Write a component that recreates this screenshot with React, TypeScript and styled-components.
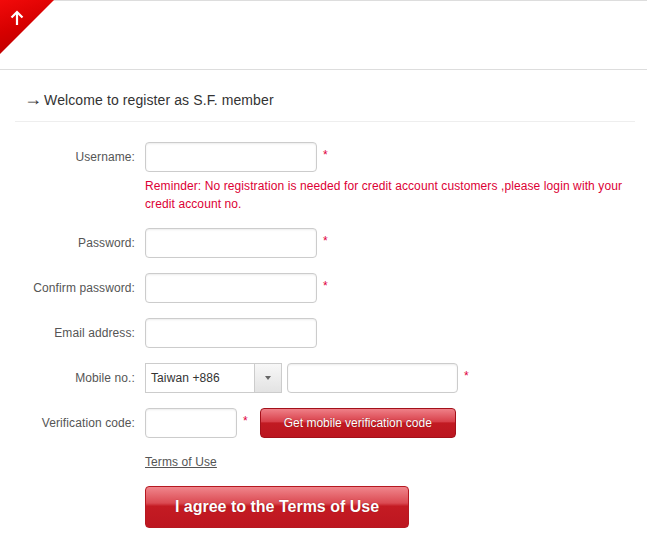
import styled, { createGlobalStyle } from "styled-components";

const GlobalStyle = createGlobalStyle`
  body {
    margin: 0;
    background: #fff;
    font-family: Arial, "Liberation Sans", Helvetica, sans-serif;
    color: #333;
  }
`;

const TopBar = styled.header`
  position: relative;
  height: 68px;
  border-top: 1px solid #ddd;
  border-bottom: 1px solid #ddd;
`;

const BackToTop = styled.a`
  position: absolute;
  left: 0;
  top: -1px;
  width: 54px;
  height: 54px;
  background: linear-gradient(160deg, #f20a0a 0%, #d60000 45%, #b30000 100%);
  clip-path: polygon(0 0, 100% 0, 0 100%);
  cursor: pointer;

  svg {
    position: absolute;
    left: 10px;
    top: 10px;
  }
`;

const Content = styled.main`
  padding: 0 12px 0 15px;
`;

const Title = styled.h2`
  margin: 0;
  height: 20px;
  padding: 20px 0 11px 9px;
  font-size: 14px;
  line-height: 20px;
  font-weight: normal;
  letter-spacing: 0.1px;
  color: #333;
  border-bottom: 1px solid #eee;
`;

const TitleArrow = styled.span`
  font-size: 18px;
  line-height: 0;
  margin-right: 2px;
`;

const Form = styled.form`
  display: grid;
  grid-template-columns: 120px 1fr;
  column-gap: 10px;
  row-gap: 15px;
  padding-top: 20px;
  font-size: 12px;
  letter-spacing: 0.1px;
`;

const Label = styled.label`
  height: 30px;
  line-height: 30px;
  text-align: right;
  color: #555;
  white-space: nowrap;
`;

const Field = styled.div`
  display: flex;
  flex-direction: column;
`;

const Line = styled.div`
  display: flex;
  align-items: center;
  height: 30px;
`;

const TextInput = styled.input<{ $width: number }>`
  box-sizing: border-box;
  width: ${(p) => p.$width}px;
  height: 30px;
  margin: 0;
  padding: 0 6px;
  border: 1px solid #ccc;
  border-radius: 4px;
  box-shadow: inset 0 1px 2px rgba(0, 0, 0, 0.08);
  font: 12px Arial, "Liberation Sans", sans-serif;
  color: #333;
  outline: none;
`;

const Required = styled.span`
  margin-left: 6px;
  color: #e0003c;
  font-size: 12px;
  align-self: flex-start;
  line-height: 27px;
`;

const Reminder = styled.p`
  margin: 5px 0 0;
  line-height: 18px;
  color: #dc0035;
`;

const CountrySelect = styled.div`
  box-sizing: border-box;
  display: flex;
  width: 137px;
  height: 30px;
  margin-right: 5px;
  border: 1px solid #ccc;
  background: #fff;
  color: #333;
`;

const SelectValue = styled.span`
  flex: 1;
  padding-left: 5px;
  line-height: 28px;
`;

const SelectArrow = styled.span`
  width: 26px;
  display: flex;
  align-items: center;
  justify-content: center;
  border-left: 1px solid #ccc;
  background: linear-gradient(#f7f7f7, #e3e3e3);

  &::after {
    content: "";
    border-left: 3.5px solid transparent;
    border-right: 3.5px solid transparent;
    border-top: 4px solid #666;
  }
`;

const SmsButton = styled.button`
  box-sizing: border-box;
  width: 196px;
  height: 30px;
  margin-left: 12px;
  padding: 0;
  border: 1px solid #a3111a;
  border-radius: 4px;
  background: linear-gradient(#ef8088 0%, #d8404a 45%, #c11a22 50%, #bb1620 100%);
  color: #fff;
  font: 12px Arial, "Liberation Sans", sans-serif;
  text-shadow: 0 0 1px rgba(80, 0, 0, 0.6);
  cursor: pointer;
`;

const TermsLink = styled.a`
  color: #555;
  text-decoration: underline;
  line-height: 18px;
  cursor: pointer;
`;

const AgreeButton = styled.button`
  box-sizing: border-box;
  width: 264px;
  height: 42px;
  margin-top: 15px;
  padding: 0;
  border: 1px solid #b51820;
  border-radius: 4px;
  background: linear-gradient(#f0868c 0%, #db4a52 40%, #c41b23 48%, #bd1620 100%);
  color: #fff;
  font: bold 16px Arial, "Liberation Sans", sans-serif;
  text-shadow: 0 0 1px rgba(90, 0, 0, 0.6);
  cursor: pointer;
`;

const Spacer = styled.div``;

const App = () => {
  return (
    <>
      <GlobalStyle />
      <TopBar>
        <BackToTop>
          <svg width="14" height="16" viewBox="0 0 14 16" fill="none" stroke="#fff" strokeWidth="2.2">
            <path d="M7 15V2" />
            <path d="M1.5 7.5L7 2l5.5 5.5" />
          </svg>
        </BackToTop>
      </TopBar>
      <Content>
        <Title>
          <TitleArrow>→</TitleArrow>Welcome to register as S.F. member
        </Title>
        <Form onSubmit={(e) => e.preventDefault()}>
          <Label>Username:</Label>
          <Field>
            <Line>
              <TextInput $width={172} />
              <Required>*</Required>
            </Line>
            <Reminder>
              Reminder: No registration is needed for credit account customers ,please login with your credit account no.
            </Reminder>
          </Field>

          <Label>Password:</Label>
          <Line>
            <TextInput $width={172} type="password" />
            <Required>*</Required>
          </Line>

          <Label>Confirm password:</Label>
          <Line>
            <TextInput $width={172} type="password" />
            <Required>*</Required>
          </Line>

          <Label>Email address:</Label>
          <Line>
            <TextInput $width={172} />
          </Line>

          <Label>Mobile no.:</Label>
          <Line>
            <CountrySelect>
              <SelectValue>Taiwan +886</SelectValue>
              <SelectArrow />
            </CountrySelect>
            <TextInput $width={171} />
            <Required>*</Required>
          </Line>

          <Label>Verification code:</Label>
          <Line>
            <TextInput $width={92} />
            <Required>*</Required>
            <SmsButton type="button">Get mobile verification code</SmsButton>
          </Line>

          <Spacer />
          <Field>
            <TermsLink>Terms of Use</TermsLink>
            <div>
              <AgreeButton type="submit">I agree to the Terms of Use</AgreeButton>
            </div>
          </Field>
        </Form>
      </Content>
    </>
  );
};

export default App;
